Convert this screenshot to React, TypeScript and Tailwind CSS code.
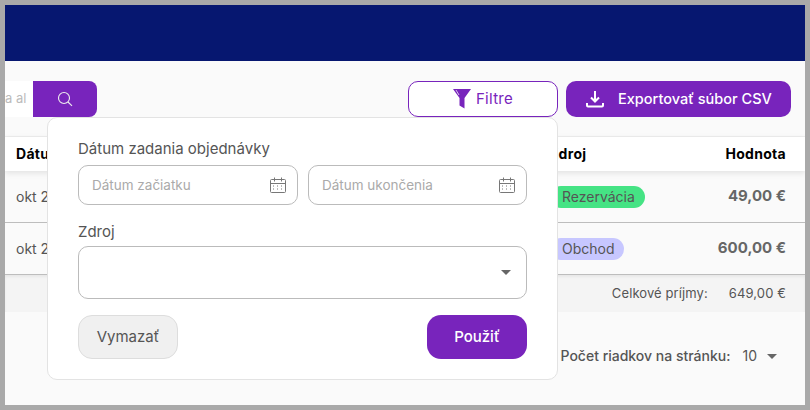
function CalendarIcon() {
  return (
    <svg width="18" height="18" viewBox="0 0 18 18" fill="none" stroke="#777" strokeWidth="1">
      <rect x="1.5" y="3.5" width="15" height="13" rx="1" />
      <path d="M1.5 7.5h15M5.5 1.5v4M12.5 1.5v4" />
      <path d="M4 10h2M8 10h2M12 10h2M4 13h2M8 13h2M12 13h2" strokeDasharray="1 1" />
    </svg>
  );
}

function Caret() {
  return <div className="h-0 w-0 border-x-[5px] border-t-[5px] border-x-transparent border-t-[#666]" />;
}

function DateInput({ placeholder, width }: { placeholder: string; width: string }) {
  return (
    <div className={`flex h-10 items-center justify-between rounded-[10px] border border-[#bbb] pl-[13px] pr-[10px] ${width}`}>
      <span className="text-[13.5px] text-[#aaa]">{placeholder}</span>
      <CalendarIcon />
    </div>
  );
}

function Row({ date, pill, pillColor, pillWidth, value }: { date: string; pill: string; pillColor: string; pillWidth: string; value: string }) {
  return (
    <div className="flex h-[52px] items-center border-b border-[#bdbdbd] bg-[#fafafa] pl-[11px] pr-[19px]">
      <span className="w-[534px] shrink-0 text-sm text-[#555]">{date}</span>
      <span className={`flex h-[22px] items-center rounded-full pl-[12px] text-sm text-[#555] ${pillWidth} ${pillColor}`}>{pill}</span>
      <span className="ml-auto text-[15px] font-bold text-[#666]">{value}</span>
    </div>
  );
}

export default function App() {
  return (
    <div className="h-[410px] w-[810px] border-[5px] border-[#a9a9a9] bg-[#fafafa] font-['Inter','Liberation_Sans',sans-serif]">
      <div className="relative h-full w-full overflow-hidden">
        <div className="h-14 bg-[#061770]" />

        <div className="flex items-center justify-between pl-0 pr-[14px] pt-5">
          <div className="flex h-9">
            <div className="flex w-[28px] items-center overflow-hidden bg-white text-[13px] text-[#bbb]">a al</div>
            <button className="flex w-16 items-center justify-center rounded-r-lg bg-[#7824bc]">
              <svg width="16" height="16" viewBox="0 0 16 16" fill="none" stroke="#eee" strokeWidth="1.1">
                <circle cx="7" cy="7" r="5.5" />
                <path d="M11 11l4 3.8" />
              </svg>
            </button>
          </div>
          <div className="flex gap-2">
            <button className="flex h-9 w-[150px] items-center justify-center gap-[5px] rounded-[10px] border border-[#7824bc] bg-white text-[15px] tracking-[0.3px] text-[#7824bc]">
              <svg width="18" height="20" viewBox="0 0 18 20" fill="#7824bc">
                <path d="M0 0h18L11.5 9v10.5l-5-3V9z" />
                <path d="M3 1l3 5" stroke="#d9c2ec" strokeWidth="1" />
              </svg>
              Filtre
            </button>
            <button className="flex h-9 w-[225px] items-center gap-[14px] rounded-[10px] bg-[#7824bc] pl-5 text-[14.5px] font-medium text-white">
              <svg width="18" height="18" viewBox="0 0 18 18" fill="none" stroke="#fff" strokeWidth="2">
                <path d="M9 1v10M5 7.5l4 4 4-4" />
                <path d="M1 13v2.5a1 1 0 0 0 1 1h14a1 1 0 0 0 1-1V13" />
              </svg>
              Exportovať súbor CSV
            </button>
          </div>
        </div>

        <div className="relative mt-[19px] border-t border-[#eee]">
          <div className="flex h-[34px] items-center bg-white pl-[11px] pr-[19px] text-sm font-bold tracking-[0.3px] text-black shadow-[0_2px_6px_rgba(0,0,0,0.1)]">
            <span className="w-[533px] shrink-0">Dátum</span>
            <span>Zdroj</span>
            <span className="ml-auto">Hodnota</span>
          </div>
        </div>
        <Row date="okt 2025" pill="Rezervácia" pillColor="bg-[#45e384]" pillWidth="w-[95px]" value="49,00 €" />
        <Row date="okt 2025" pill="Obchod" pillColor="bg-[#c7c7ff]" pillWidth="w-[74px]" value="600,00 €" />
        <div className="flex h-[37px] items-center justify-end gap-[21px] bg-[#f4f4f4] pr-[19px] text-[13px] tracking-[0.1px] text-[#555] shadow-[inset_0_2px_3px_rgba(0,0,0,0.05)]">
          <span>Celkové príjmy:</span>
          <span>649,00 €</span>
        </div>
        <div className="flex items-center justify-end pr-[28px] pt-[34px] text-sm text-[#555]">
          <span className="font-medium">Počet riadkov na stránku:</span>
          <span className="ml-3">10</span>
          <span className="ml-[10px]"><Caret /></span>
        </div>

        <div className="absolute left-[42px] top-[112px] flex h-[263px] w-[511px] flex-col rounded-[10px] border border-[#e3e3e3] bg-white px-[30px] pt-[21px] text-[#555]">
          <label className="text-[15px] leading-[20px]">Dátum zadania objednávky</label>
          <div className="mt-[6px] flex gap-[10px]">
            <DateInput placeholder="Dátum začiatku" width="w-[220px]" />
            <DateInput placeholder="Dátum ukončenia" width="w-[219px]" />
          </div>
          <label className="mt-[17px] text-[15px] leading-[20px]">Zdroj</label>
          <div className="mt-[4px] flex h-[53px] w-[449px] items-center justify-end rounded-[10px] border border-[#bbb] pr-[15px]">
            <Caret />
          </div>
          <div className="mt-4 flex justify-between">
            <button className="h-11 w-[100px] rounded-[14px] border border-[#ddd] bg-[#f0f0f0] text-[15px] text-[#555]">Vymazať</button>
            <button className="h-11 w-[100px] rounded-[14px] bg-[#7824bc] text-[15px] font-medium text-white">Použiť</button>
          </div>
        </div>
      </div>
    </div>
  );
}
